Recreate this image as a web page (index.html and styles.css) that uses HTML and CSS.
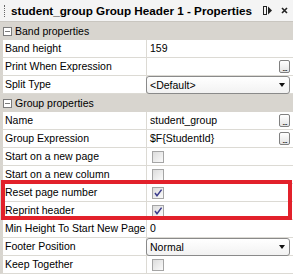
FILE: index.html
```html
<!DOCTYPE html>
<html lang="en">
<head>
    <meta charset="UTF-8">
    <title>student_group Group Header 1 - Properties</title>
    <link rel="stylesheet" href="styles.css">
</head>
<body>

<div class="panel">
    <div class="titlebar">
        <span class="grip"></span>
        <span class="title">student_group Group Header 1 - Properties</span>
        <span class="tb-icons">
            <svg width="9" height="9" viewBox="0 0 9 9"><rect x="0.5" y="0.5" width="3" height="8" fill="none" stroke="#222"/><path d="M5 0.5 L9 4.5 L5 8.5 Z" fill="#222"/></svg>
            <svg width="7" height="7" viewBox="0 0 7 7"><path d="M1 1 L6 6 M6 1 L1 6" stroke="#222" stroke-width="1.6"/></svg>
        </span>
    </div>

    <div class="sheet">
        <div class="cat"><span class="toggle"></span>Band properties</div>
        <div class="prop"><div class="name">Band height</div><div class="value">159</div></div>
        <div class="prop"><div class="name">Print When Expression</div><div class="value"><span class="dots">...</span></div></div>
        <div class="prop"><div class="name">Split Type</div><div class="value combo-cell"><div class="combo"><span>&lt;Default&gt;</span><span class="arrow"></span></div></div></div>

        <div class="cat"><span class="toggle"></span>Group properties</div>
        <div class="prop"><div class="name">Name</div><div class="value">student_group<span class="dots">...</span></div></div>
        <div class="prop"><div class="name">Group Expression</div><div class="value">$F{StudentId}<span class="dots">...</span></div></div>
        <div class="prop"><div class="name">Start on a new page</div><div class="value"><span class="check"></span></div></div>
        <div class="prop"><div class="name">Start on a new column</div><div class="value"><span class="check"></span></div></div>
        <div class="prop"><div class="name">Reset page number</div><div class="value"><span class="check"><svg width="10" height="10" viewBox="0 0 10 10"><path d="M2 5 L4 7.8 L8.6 1.6" fill="none" stroke="#3b3b8c" stroke-width="1.5"/></svg></span></div></div>
        <div class="prop"><div class="name">Reprint header</div><div class="value"><span class="check"><svg width="10" height="10" viewBox="0 0 10 10"><path d="M2 5 L4 7.8 L8.6 1.6" fill="none" stroke="#3b3b8c" stroke-width="1.5"/></svg></span></div></div>
        <div class="prop"><div class="name">Min Height To Start New Page</div><div class="value">0</div></div>
        <div class="prop"><div class="name">Footer Position</div><div class="value combo-cell"><div class="combo"><span>Normal</span><span class="arrow"></span></div></div></div>
        <div class="prop"><div class="name">Keep Together</div><div class="value"><span class="check"></span></div></div>
    </div>

    <div class="highlight"></div>
</div>

</body>
</html>
```

FILE: styles.css
```css
:root {
    --cat: #d8d5cf;
    --line: #dcdad4;
    --red: #e2212b;
}
body {
    margin: 0;
    font-family: 'Liberation Sans', Arial, sans-serif;
    font-size: 10.5px;
    color: #000;
    background: #fff;
}
.panel {
    width: 293px;
    height: 276px;
    position: relative;
    overflow: hidden;
    background: #fff;
}

/* Title bar */
.titlebar {
    height: 21px;
    display: flex;
    align-items: center;
    background: #f4f4f4;
    border-bottom: 1px solid #c9c6c0;
}
.grip {
    width: 1px;
    height: 12px;
    margin: 0 5px 0 4px;
    border-left: 1px dotted #666;
}
.title { font-size: 11.7px; font-weight: bold; white-space: nowrap; }
.tb-icons { margin-left: auto; display: flex; align-items: center; gap: 9px; padding-right: 5px; }

/* Property sheet */
.cat {
    height: 18px;
    display: flex;
    align-items: center;
    background: var(--cat);
    padding-left: 3px;
}
.toggle {
    width: 7px;
    height: 7px;
    border: 1px solid #7c7c7c;
    background: #fff linear-gradient(#7c7c7c, #7c7c7c) center / 5px 1px no-repeat;
    margin-right: 3px;
}
.prop {
    display: grid;
    grid-template-columns: 144px 1fr;
    height: 17px;
    border-bottom: 1px solid var(--line);
    border-left: 3px solid var(--cat);
}
.name {
    padding-left: 2px;
    line-height: 17px;
    white-space: nowrap;
    overflow: hidden;
    border-right: 1px solid var(--line);
}
.value {
    position: relative;
    padding-left: 3px;
    line-height: 17px;
    display: flex;
    align-items: center;
    white-space: nowrap;
}
.dots {
    position: absolute;
    right: 3px;
    top: 2px;
    width: 9px;
    height: 11px;
    border: 1px solid #808080;
    border-radius: 2px;
    background: linear-gradient(#ffffff, #e4e4e4);
    font-size: 9px;
    line-height: 14px;
    text-align: center;
    letter-spacing: -1px;
}
.check {
    width: 10px;
    height: 10px;
    margin-left: 2px;
    border: 1px solid #a5a5a5;
    background: linear-gradient(135deg, #dcdcdc, #fafafa);
    display: flex;
}
.combo-cell { padding-left: 0; margin-left: -1px; }
.combo {
    flex: 1;
    height: 16px;
    margin-right: 3px;
    border: 1px solid #8a8a8a;
    border-radius: 3px;
    background: linear-gradient(#ffffff, #f2f2f2);
    display: flex;
    align-items: center;
    padding-left: 3px;
    line-height: 14px;
}
.arrow {
    margin-left: auto;
    margin-right: 4px;
    width: 0;
    height: 0;
    border-left: 3.5px solid transparent;
    border-right: 3.5px solid transparent;
    border-top: 4px solid #111;
}

/* Annotation box */
.highlight {
    position: absolute;
    left: 1px;
    top: 180px;
    width: 283px;
    height: 32px;
    border: 4px solid var(--red);
}
```
